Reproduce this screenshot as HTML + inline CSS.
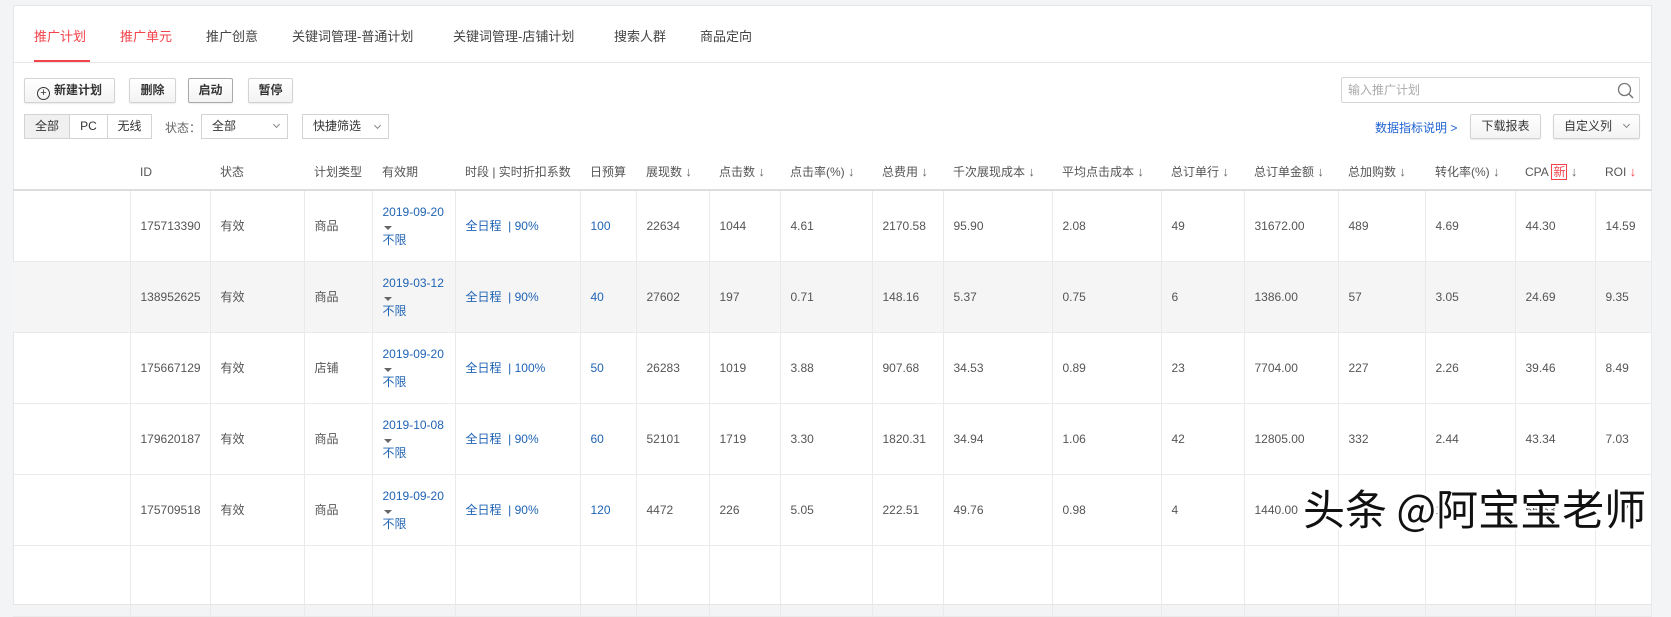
<!DOCTYPE html>
<html><head><meta charset="utf-8"><style>
*{box-sizing:border-box;margin:0;padding:0}
body{width:1671px;height:547px;overflow:hidden;background:#f3f4f6;font-family:"Liberation Sans","Noto Sans CJK SC",sans-serif;font-size:12px;color:#555;position:relative}
.panel{position:absolute;left:13px;top:5px;width:1639px;height:600px;background:#fff;border:1px solid #e6e6e6}
.a{position:absolute;white-space:nowrap}
.tab{position:absolute;top:26px;font-size:13px;color:#444}
.btn{position:absolute;height:25px;border:1px solid #d3d3d3;border-radius:2px;background:linear-gradient(#fff,#f3f3f3);font-size:12px;font-weight:bold;color:#333;text-align:center;line-height:23px;box-shadow:0 1px 1px rgba(0,0,0,.08)}
.fb{position:absolute;height:25px;border:1px solid #d3d3d3;background:#fff;font-size:12px;color:#333;line-height:23px}
.caret{position:absolute;width:5px;height:5px;border-right:1px solid #888;border-bottom:1px solid #888;transform:rotate(45deg)}
table{position:absolute;left:13px;top:154px;border-collapse:collapse;table-layout:fixed}
th{height:36px;font-weight:normal;text-align:left;color:#555;font-size:12px;padding-left:10px;border-bottom:2px solid #ddd;white-space:nowrap}
td{height:71px;border-right:1px solid #eaeaea;border-bottom:1px solid #eaeaea;padding-left:10px;color:#555;white-space:nowrap}
tr.g td{background:#f5f5f5}
.bl{color:#1f63b4}
.ar{color:#666;font-size:13px}
.d{line-height:14px}
.tri{display:inline-block;width:0;height:0;border-left:4px solid transparent;border-right:4px solid transparent;border-top:4px solid #666;margin:0 0 0 1px}
</style></head><body>
<div class="panel"></div>
<div class="tab" style="left:34px;color:#f2434b">推广计划</div>
<div class="a" style="left:34px;top:60px;width:56px;height:2px;background:#f2434b"></div>
<div class="tab" style="left:120px;color:#f2434b">推广单元</div>
<div class="tab" style="left:206px">推广创意</div>
<div class="tab" style="left:292px">关键词管理-普通计划</div>
<div class="tab" style="left:453px">关键词管理-店铺计划</div>
<div class="tab" style="left:614px">搜索人群</div>
<div class="tab" style="left:700px">商品定向</div>
<div class="a" style="left:14px;top:62px;width:1637px;height:1px;background:#e6e6e6"></div>

<div class="btn" style="left:24px;top:78px;width:91px"><span style="display:inline-block;width:13px;height:13px;border:1px solid #333;border-radius:50%;font-size:11px;line-height:10px;vertical-align:-2px;margin-right:4px;font-weight:normal">+</span>新建计划</div>
<div class="btn" style="left:129px;top:78px;width:47px">删除</div>
<div class="btn" style="left:188px;top:78px;width:45px;border-color:#aaa">启动</div>
<div class="btn" style="left:248px;top:78px;width:45px">暂停</div>

<div class="fb" style="left:24px;top:114px;width:46px;background:#f0f0f0;text-align:center">全部</div>
<div class="fb" style="left:69px;top:114px;width:39px;text-align:center">PC</div>
<div class="fb" style="left:107px;top:114px;width:45px;text-align:center">无线</div>
<div class="a" style="left:165px;top:119px;color:#666">状态：</div>
<div class="fb" style="left:201px;top:114px;width:87px;padding-left:10px">全部<span class="caret" style="left:72px;top:7px"></span></div>
<div class="fb" style="left:302px;top:114px;width:87px;padding-left:10px">快捷筛选<span class="caret" style="left:72px;top:8px"></span></div>

<div class="a" style="left:1341px;top:77px;width:299px;height:26px;border:1px solid #d6d6d6;border-radius:2px;color:#aaa;padding-left:6px;line-height:24px">输入推广计划
<svg style="position:absolute;right:5px;top:4px" width="17" height="17" viewBox="0 0 17 17"><circle cx="7.5" cy="7.5" r="6" fill="none" stroke="#777" stroke-width="1.3"/><line x1="12" y1="12" x2="16" y2="16" stroke="#777" stroke-width="1.5"/></svg></div>
<div class="a bl" style="left:1375px;top:119px;color:#1f63d0">数据指标说明 &gt;</div>
<div class="btn" style="left:1470px;top:114px;width:71px;font-weight:normal">下载报表</div>
<div class="btn" style="left:1553px;top:114px;width:87px;font-weight:normal;text-align:left;padding-left:10px">自定义列<span class="caret" style="left:70px;top:7px"></span></div>

<table>
<colgroup><col style="width:117px"><col style="width:80px"><col style="width:94px"><col style="width:68px"><col style="width:83px"><col style="width:125px"><col style="width:56px"><col style="width:73px"><col style="width:71px"><col style="width:92px"><col style="width:71px"><col style="width:109px"><col style="width:109px"><col style="width:83px"><col style="width:94px"><col style="width:87px"><col style="width:90px"><col style="width:80px"><col style="width:56px"></colgroup>
<tr><th></th><th>ID</th><th>状态</th><th>计划类型</th><th>有效期</th><th>时段 | 实时折扣系数</th><th>日预算</th><th>展现数 <span class="ar">↓</span></th><th>点击数 <span class="ar">↓</span></th><th>点击率(%) <span class="ar">↓</span></th><th>总费用 <span class="ar">↓</span></th><th>千次展现成本 <span class="ar">↓</span></th><th>平均点击成本 <span class="ar">↓</span></th><th>总订单行 <span class="ar">↓</span></th><th>总订单金额 <span class="ar">↓</span></th><th>总加购数 <span class="ar">↓</span></th><th>转化率(%) <span class="ar">↓</span></th><th>CPA <span style="border:1px solid #f2434b;color:#f2434b;padding:0 1px">新</span> <span class="ar">↓</span></th><th>ROI <span class="ar" style="color:#f2434b">↓</span></th></tr>
<tr><td></td><td>175713390</td><td>有效</td><td>商品</td><td class="bl d">2019-09-20<br><span class="tri"></span><br>不限</td><td class="bl">全日程 &nbsp;| 90%</td><td class="bl">100</td><td>22634</td><td>1044</td><td>4.61</td><td>2170.58</td><td>95.90</td><td>2.08</td><td>49</td><td>31672.00</td><td>489</td><td>4.69</td><td>44.30</td><td>14.59</td></tr>
<tr class="g"><td></td><td>138952625</td><td>有效</td><td>商品</td><td class="bl d">2019-03-12<br><span class="tri"></span><br>不限</td><td class="bl">全日程 &nbsp;| 90%</td><td class="bl">40</td><td>27602</td><td>197</td><td>0.71</td><td>148.16</td><td>5.37</td><td>0.75</td><td>6</td><td>1386.00</td><td>57</td><td>3.05</td><td>24.69</td><td>9.35</td></tr>
<tr><td></td><td>175667129</td><td>有效</td><td>店铺</td><td class="bl d">2019-09-20<br><span class="tri"></span><br>不限</td><td class="bl">全日程 &nbsp;| 100%</td><td class="bl">50</td><td>26283</td><td>1019</td><td>3.88</td><td>907.68</td><td>34.53</td><td>0.89</td><td>23</td><td>7704.00</td><td>227</td><td>2.26</td><td>39.46</td><td>8.49</td></tr>
<tr><td></td><td>179620187</td><td>有效</td><td>商品</td><td class="bl d">2019-10-08<br><span class="tri"></span><br>不限</td><td class="bl">全日程 &nbsp;| 90%</td><td class="bl">60</td><td>52101</td><td>1719</td><td>3.30</td><td>1820.31</td><td>34.94</td><td>1.06</td><td>42</td><td>12805.00</td><td>332</td><td>2.44</td><td>43.34</td><td>7.03</td></tr>
<tr><td></td><td>175709518</td><td>有效</td><td>商品</td><td class="bl d">2019-09-20<br><span class="tri"></span><br>不限</td><td class="bl">全日程 &nbsp;| 90%</td><td class="bl">120</td><td>4472</td><td>226</td><td>5.05</td><td>222.51</td><td>49.76</td><td>0.98</td><td>4</td><td>1440.00</td><td>77</td><td>1.77</td><td>55.63</td><td>6.47</td></tr>
<tr><td></td><td></td><td></td><td></td><td></td><td></td><td></td><td></td><td></td><td></td><td></td><td></td><td></td><td></td><td></td><td></td><td></td><td></td><td></td></tr>
</table>
<div class="a" style="left:1303px;top:484px;font-size:42px;color:#111;font-family:'Noto Sans CJK SC',sans-serif;text-shadow:-2px -2px 0 #fff,2px -2px 0 #fff,-2px 2px 0 #fff,2px 2px 0 #fff,0 2px 0 #fff,2px 0 0 #fff,-2px 0 0 #fff,0 -2px 0 #fff;line-height:48px">头条 @阿宝宝老师</div>
</body></html>
